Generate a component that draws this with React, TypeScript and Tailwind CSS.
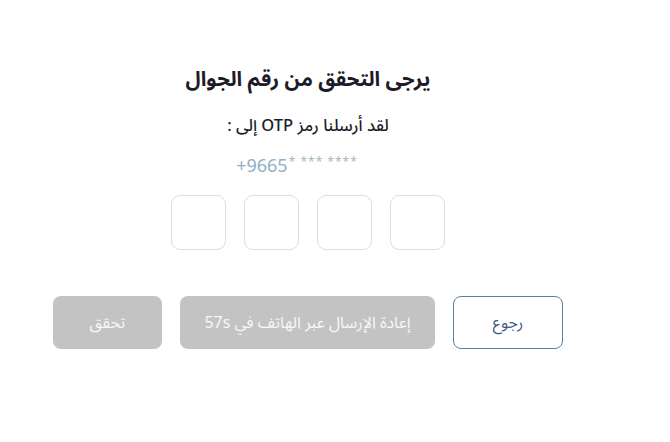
import React from "react";

export default function App() {
  const font = { fontFamily: '"Noto Sans Arabic", "DejaVu Sans", "Noto Sans", sans-serif' };
  return (
    <div className="w-[670px] h-[442px] bg-white overflow-hidden" style={font}>
      <div dir="rtl" className="w-[510px] ml-[53px] pt-[60px] flex flex-col items-center">
        <h1 className="text-[20.5px] font-bold text-[#1c1c28] leading-[40px]">يرجى التحقق من رقم الجوال</h1>
        <p className="mt-[12px] text-[16.5px] font-medium text-[#1c1c28] leading-[28px]">لقد أرسلنا رمز OTP إلى :</p>
        <div dir="ltr" className="mt-[14px] mr-[22px] text-[18px] text-[#8fb0c6] leading-[24px] flex flex-row items-start gap-[1px]">
          <span>+9665</span>
          <span className="text-[12px] leading-[18px] text-[#a9b8c1] tracking-[1px]">* *** ****</span>
        </div>
        <div dir="ltr" className="mt-[17px] flex gap-[18px]">
          {[0, 1, 2, 3].map((i) => (
            <div key={i} className="w-[55px] h-[55px] rounded-[9px] border border-[#d2e1e5] bg-white" />
          ))}
        </div>
        <div className="mt-[46px] w-full flex gap-[18px]">
          <button className="w-[110px] h-[53px] rounded-[8px] border border-[#5a7fa4] bg-white text-[16px] text-[#3d5b7c]">رجوع</button>
          <button className="w-[255px] h-[53px] rounded-[8px] bg-[#c3c3c3] text-[16px] text-[#f8f8f8]">إعادة الإرسال عبر الهاتف في 57s</button>
          <button className="w-[109px] h-[53px] rounded-[8px] bg-[#c3c3c3] text-[16px] text-[#f8f8f8]">تحقق</button>
        </div>
      </div>
    </div>
  );
}
